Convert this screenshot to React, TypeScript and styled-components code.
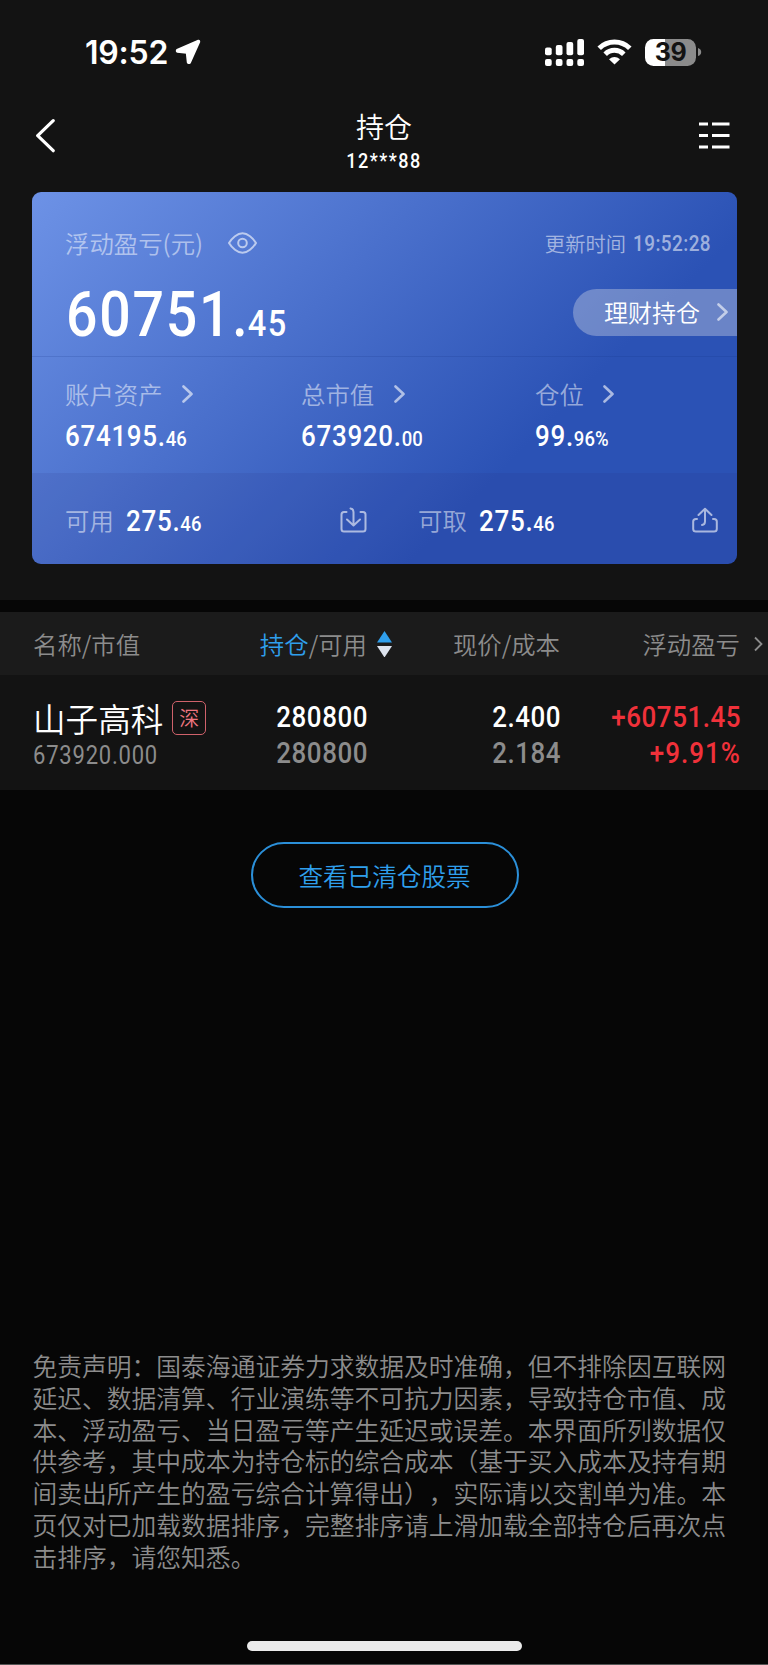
import React from "react";
import styled, { createGlobalStyle, css } from "styled-components";

const GlobalStyle = createGlobalStyle`
  * { box-sizing: border-box; }
  body {
    margin: 0;
    background: #060606;
    color: #fff;
    font-family: "Noto Sans CJK SC", sans-serif;
    font-weight: 350;
    text-spacing-trim: space-all;
  }
`;

/* Narrow numerals: Roboto squeezed horizontally */
const din = css<{ $from?: string }>`
  font-family: Roboto, "Noto Sans CJK SC", sans-serif;
  transform: scaleX(0.88);
  transform-origin: ${(p) => p.$from ?? "left"} center;
  white-space: nowrap;
`;

const Screen = styled.div`
  width: 768px;
  height: 1665px;
  display: flex;
  flex-direction: column;
  overflow: hidden;
  background: #060606;
  border-bottom: 1px solid #555;
`;

const Top = styled.header`
  height: 600px;
  background: #131313;
  padding: 0 31px 0 32px;
`;

const StatusBar = styled.div`
  height: 104px;
  padding: 0 35px 0 53px;
  display: flex;
  align-items: center;
`;

const Clock = styled.span`
  font: 600 32px/40px Inter, sans-serif;
  width: 83px;
  padding-top: 2px;
  letter-spacing: -0.2px;
  margin-right: 7px;
  white-space: nowrap;
`;

const StatusIcons = styled.div`
  margin-left: auto;
  display: flex;
  align-items: center;
`;

const WifiIcon = styled.svg`
  margin-left: 13px;
`;

const Battery = styled.div`
  width: 51px;
  height: 27px;
  margin-left: 13px;
  border-radius: 8.5px;
  background: linear-gradient(90deg, #fff 20px, #8b8b8b 20px);
  color: #131313;
  font: 700 25px/27px Inter, sans-serif;
  letter-spacing: -0.5px;
  text-align: center;
`;

const NavBar = styled.nav`
  height: 88px;
  padding: 0 7px 0 4px;
  display: flex;
  justify-content: space-between;
`;

const NavIcon = styled.div`
  width: 31px;
  padding-top: 15px;
`;

const Title = styled.div`
  padding: 2px 0 0 2px;
  text-align: center;
`;

const TitleMain = styled.h1`
  margin: 0;
  font-size: 28px;
  line-height: 40px;
  font-weight: 350;
`;

const TitleSub = styled.div`
  ${din}
  font-size: 20.5px;
  line-height: 30px;
  font-weight: 500;
  letter-spacing: 1.7px;
`;

const Card = styled.section`
  height: 372px;
  border-radius: 9px;
  overflow: hidden;
  background: linear-gradient(135deg, #6d92e6 0%, #2b52b5 69.5%);
`;

const Summary = styled.div`
  height: 165px;
  padding-left: 33px;
  display: flex;
  justify-content: space-between;
  border-bottom: 1px solid rgba(20, 50, 130, 0.17);
`;

const SummaryLeft = styled.div`
  padding-top: 34px;
`;

const SummaryRight = styled.div`
  padding-top: 37px;
  display: flex;
  flex-direction: column;
  align-items: flex-end;
`;

const Label = styled.span`
  font-size: 24.4px;
  line-height: 34px;
  color: rgba(255, 255, 255, 0.52);
  white-space: nowrap;
`;

const LabelRow = styled.div<{ $gap: number }>`
  display: flex;
  align-items: center;
  gap: ${(p) => p.$gap}px;
  height: 34px;
`;

const BigNumber = styled.div`
  ${din}
  display: flex;
  align-items: baseline;
  margin: 20px 0 0 1px;
  font-size: 63px;
  line-height: 70px;
  font-weight: 500;
  letter-spacing: 2px;
  small {
    margin-left: -2px;
    font-size: 37px;
    letter-spacing: 1.6px;
  }
`;

const Updated = styled.div`
  padding-right: 27px;
  font-size: 20.3px;
  line-height: 28px;
  color: rgba(255, 255, 255, 0.55);
  display: flex;
  gap: 7px;
`;

const UpdatedTime = styled.span`
  ${din}
  display: block;
  width: 77px;
  padding-top: 1px;
  font-size: 21.5px;
  letter-spacing: 0.5px;
  font-weight: 500;
`;

const Pill = styled.button`
  border: 0;
  margin: 30.5px 0 0;
  width: 164px;
  height: 47px;
  padding: 0 9px 0 31px;
  border-radius: 24px 0 0 24px;
  background: rgba(210, 215, 230, 0.38);
  color: #fff;
  font: 350 24px/34px "Noto Sans CJK SC", sans-serif;
  display: flex;
  align-items: center;
  justify-content: space-between;
  white-space: nowrap;
`;

const Metrics = styled.div`
  height: 116px;
  padding: 20px 0 0 33px;
  display: grid;
  grid-template-columns: 236px 234px 1fr;
`;

const Value = styled.div`
  ${din}
  font-size: 29.5px;
  line-height: 36px;
  font-weight: 500;
  letter-spacing: 0.8px;
  small {
    font-size: 21px;
    letter-spacing: 0.1px;
  }
`;

const MetricValue = styled(Value)`
  margin-top: 7px;
`;

const FundValue = styled(Value)`
  padding-top: 5px;
`;

const Funds = styled.div`
  height: 91px;
  padding: 1px 19px 0 33px;
  display: grid;
  grid-template-columns: 353px 1fr;
  background: rgba(40, 40, 120, 0.1);
`;

const Fund = styled.div`
  height: 91px;
  display: flex;
  align-items: center;
  gap: 12px;
`;

const FundIcon = styled.svg<{ $right: number }>`
  margin-left: auto;
  margin-right: ${(p) => p.$right}px;
`;

const columns = css`
  display: grid;
  grid-template-columns: 207px 127px 193px 180px;
`;

const TableHead = styled.div`
  ${columns}
  margin-top: 12px;
  height: 63px;
  padding-left: 33px;
  background: #1b1b1b;
  align-items: center;
  font-size: 24.4px;
  line-height: 34px;
  color: #8c8c8c;
`;

const HeadCell = styled.div<{ $left?: boolean }>`
  display: flex;
  align-items: center;
  justify-content: ${(p) => (p.$left ? "flex-start" : "flex-end")};
  white-space: nowrap;
  em {
    font-style: normal;
    color: #2f9fec;
  }
  svg {
    flex: none;
  }
`;

const SortIcon = styled.svg`
  margin: 0 -25px 0 10px;
`;

const MoreIcon = styled.svg`
  margin: 0 -23px 0 14px;
`;

const Row = styled.div`
  ${columns}
  height: 115px;
  padding: 24px 0 0 33px;
  background: #131313;
`;

const NameLine = styled.div`
  display: flex;
  align-items: center;
  gap: 9px;
  height: 38px;
  font-size: 32.6px;
  line-height: 36px;
  white-space: nowrap;
`;

const Badge = styled.span`
  flex: none;
  width: 34px;
  height: 34px;
  border: 1.5px solid #d0626b;
  border-radius: 5px;
  color: #f07680;
  font-size: 20px;
  line-height: 31px;
  text-align: center;
`;

const MarketValue = styled.div`
  ${din}
  margin-top: 3px;
  font-size: 25px;
  line-height: 31px;
  font-weight: 450;
  letter-spacing: 0.9px;
  color: #8c8c8c;
`;

const NumberCell = styled.div<{ $tone?: "up"; $from?: string }>`
  ${din}
  padding-top: 1px;
  margin-right: -1px;
  text-align: right;
  font-size: 29.5px;
  line-height: 35.7px;
  font-weight: 500;
  letter-spacing: 0.6px;
  color: ${(p) => (p.$tone === "up" ? "#f0313a" : "#fff")};
  div + div {
    color: ${(p) => (p.$tone === "up" ? "#f0313a" : "#8c8c8c")};
    letter-spacing: ${(p) => (p.$tone === "up" ? "1.2px" : "0.6px")};
  }
`;

const ClearedButton = styled.button`
  align-self: center;
  flex: none;
  margin: 52px 0 0 2px;
  width: 268px;
  height: 66px;
  border: 2px solid #2b8fd8;
  border-radius: 34px;
  background: transparent;
  color: #2f9fec;
  font: 350 24.6px/34px "Noto Sans CJK SC", sans-serif;
  padding: 0 1px 0 0;
`;

const Disclaimer = styled.footer`
  margin: 442px 0 0 32.5px;
  font-size: 24.78px;
  line-height: 31.8px;
  color: #8c8c8c;
  white-space: nowrap;
`;

const HomeBar = styled.div`
  flex: none;
  width: 275px;
  height: 10px;
  border-radius: 5px;
  background: #ebebeb;
  margin: auto auto 13px;
`;

const Chevron = ({ w = 11, h = 18, color = "rgba(255,255,255,.6)", stroke = 2.6 }) => (
  <svg width={w} height={h} viewBox={`0 0 ${w} ${h}`} fill="none" stroke={color} strokeWidth={stroke} strokeLinecap="round" strokeLinejoin="round">
    <path d={`M1.5 1.5L${w - 1.5} ${h / 2}L1.5 ${h - 1.5}`} />
  </svg>
);

const signal = [
  [0, 8.5],
  [10.8, 6],
  [21.5, 3],
  [32.3, 0],
];

const metrics = [
  { label: "账户资产", int: "674195.", dec: "46" },
  { label: "总市值", int: "673920.", dec: "00" },
  { label: "仓位", int: "99.", dec: "96%" },
];

const disclaimer = [
  "免责声明：国泰海通证券力求数据及时准确，但不排除因互联网",
  "延迟、数据清算、行业演练等不可抗力因素，导致持仓市值、成",
  "本、浮动盈亏、当日盈亏等产生延迟或误差。本界面所列数据仅",
  "供参考，其中成本为持仓标的综合成本（基于买入成本及持有期",
  "间卖出所产生的盈亏综合计算得出），实际请以交割单为准。本",
  "页仅对已加载数据排序，完整排序请上滑加载全部持仓后再次点",
  "击排序，请您知悉。",
];

export default function App() {
  return (
    <>
      <GlobalStyle />
      <Screen>
        <Top>
          <StatusBar>
            <Clock>19:52</Clock>
            <svg width="26" height="26" viewBox="0 0 26 26">
              <path d="M23.300 1.600L2 10.800Q1 12.200 2.400 13L11.600 14L12.600 23.400Q13.400 25 15 23.800L24.400 2.800Q24.600 1.200 23.300 1.600Z" fill="#fff" stroke="#fff" strokeWidth="1.600" strokeLinejoin="round" />
            </svg>
            <StatusIcons>
              <svg width="39" height="27" viewBox="0 0 39 27" fill="#fff">
                {signal.map(([x, y]) => (
                  <g key={x}>
                    <rect x={x} y={y} width="6.7" height={16.3 - y} rx="2" />
                    <rect x={x} y="20" width="6.7" height="7" rx="2" />
                  </g>
                ))}
              </svg>
              <WifiIcon width="35" height="26" viewBox="0 0 35 26" fill="none" stroke="#fff" strokeWidth="5">
                <path d="M2.2 9.2A21.8 21.8 0 0 1 32.8 9.2" />
                <path d="M8.2 15.2A13.2 13.2 0 0 1 26.8 15.2" />
                <path d="M12 20.2Q17.5 15.6 23 20.2L17.5 25.6Z" fill="#fff" stroke="none" />
              </WifiIcon>
              <Battery>39</Battery>
              <svg width="6" height="8" viewBox="0 0 6 8">
                <path d="M2 0Q5.2 1 5.2 4T2 8Z" fill="#8b8b8b" />
              </svg>
            </StatusIcons>
          </StatusBar>
          <NavBar>
            <NavIcon>
              <svg width="20" height="34" viewBox="0 0 20 34" fill="none" stroke="#fff" strokeWidth="3.2" strokeLinecap="round" strokeLinejoin="round">
                <path d="M17.200 1.700L1.700 16.700L17.200 31.700" />
              </svg>
            </NavIcon>
            <Title>
              <TitleMain>持仓</TitleMain>
              <TitleSub $from="center">12***88</TitleSub>
            </Title>
            <NavIcon>
              <svg width="31" height="32" viewBox="0 0 31 32" stroke="#fff" strokeWidth="3.2">
                <path d="M0 5H9M13 5H30.5M0 16.5H9M13 16.5H30.5M0 28H9M13 28H30.5" />
              </svg>
            </NavIcon>
          </NavBar>
          <Card>
            <Summary>
              <SummaryLeft>
                <LabelRow $gap={25}>
                  <Label>浮动盈亏(元)</Label>
                  <svg width="29" height="22" viewBox="0 0 29 22" fill="none" stroke="rgba(255,255,255,.6)" strokeWidth="2">
                    <path d="M1 11Q3 7.500 7 4.300Q14.500 -1.700 22 4.300Q26 7.500 28 11Q26 14.500 22 17.700Q14.500 23.700 7 17.700Q3 14.500 1 11Z" />
                    <circle cx="14.500" cy="11" r="4.300" />
                  </svg>
                </LabelRow>
                <BigNumber>
                  60751.<small>45</small>
                </BigNumber>
              </SummaryLeft>
              <SummaryRight>
                <Updated>
                  更新时间<UpdatedTime>19:52:28</UpdatedTime>
                </Updated>
                <Pill>
                  理财持仓
                  <Chevron />
                </Pill>
              </SummaryRight>
            </Summary>
            <Metrics>
              {metrics.map((m) => (
                <div key={m.label}>
                  <LabelRow $gap={19.5}>
                    <Label>{m.label}</Label>
                    <Chevron />
                  </LabelRow>
                  <MetricValue>
                    {m.int}
                    <small>{m.dec}</small>
                  </MetricValue>
                </div>
              ))}
            </Metrics>
            <Funds>
              <Fund>
                <Label>可用</Label>
                <FundValue>
                  275.<small>46</small>
                </FundValue>
                <FundIcon $right={51} width="27" height="26" viewBox="0 0 27 26" fill="none" stroke="rgba(255,255,255,.6)" strokeWidth="2" strokeLinecap="round" strokeLinejoin="round">
                  <path d="M6.500 5H4Q1.500 5 1.500 7.500V22Q1.500 24.500 4 24.500H23Q25.500 24.500 25.500 22V7.500Q25.500 5 23 5H20.500" />
                  <path d="M10.500 1.500Q13.500 2 13.500 5V18M7 12.500L13.500 18.500L20 12.500" />
                </FundIcon>
              </Fund>
              <Fund>
                <Label>可取</Label>
                <FundValue>
                  275.<small>46</small>
                </FundValue>
                <FundIcon $right={0} width="26" height="26" viewBox="0 0 26 26" fill="none" stroke="rgba(255,255,255,.6)" strokeWidth="2" strokeLinecap="round" strokeLinejoin="round">
                  <path d="M5 12H4Q1.200 12 1.200 14.500V22Q1.200 24.500 4 24.500H22Q24.800 24.500 24.800 22V14.500Q24.800 12 22 12H21" />
                  <path d="M13 2V14.500Q13 17.700 10 18M6.500 8L13 1.800L19.500 8" />
                </FundIcon>
              </Fund>
            </Funds>
          </Card>
        </Top>
        <TableHead>
          <HeadCell $left>名称/市值</HeadCell>
          <HeadCell>
            <em>持仓</em>/可用
            <SortIcon width="15" height="26" viewBox="0 0 15 26">
              <path d="M7.500 0L15 11.500H0Z" fill="#2f9fec" />
              <path d="M0 15H15L7.500 26.500Z" fill="#dde3ee" />
            </SortIcon>
          </HeadCell>
          <HeadCell>现价/成本</HeadCell>
          <HeadCell>
            浮动盈亏
            <MoreIcon width="9" height="16" viewBox="0 0 9 16" fill="none" stroke="#8c8c8c" strokeWidth="1.800">
              <path d="M1 1.500L7.500 8L1 14.500" />
            </MoreIcon>
          </HeadCell>
        </TableHead>
        <Row>
          <div>
            <NameLine>
              山子高科<Badge>深</Badge>
            </NameLine>
            <MarketValue>673920.000</MarketValue>
          </div>
          <NumberCell $from="right">
            <div>280800</div>
            <div>280800</div>
          </NumberCell>
          <NumberCell $from="right">
            <div>2.400</div>
            <div>2.184</div>
          </NumberCell>
          <NumberCell $from="right" $tone="up">
            <div>+60751.45</div>
            <div>+9.91%</div>
          </NumberCell>
        </Row>
        <ClearedButton>查看已清仓股票</ClearedButton>
        <Disclaimer>
          {disclaimer.map((line) => (
            <div key={line}>{line}</div>
          ))}
        </Disclaimer>
        <HomeBar />
      </Screen>
    </>
  );
}
